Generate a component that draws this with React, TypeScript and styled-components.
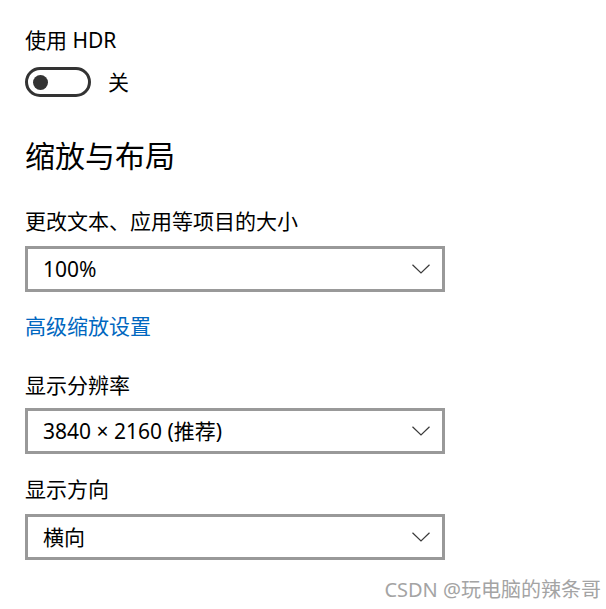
import styled, { createGlobalStyle } from "styled-components";

const GlobalStyle = createGlobalStyle`
  html, body {
    margin: 0;
    padding: 0;
    background: #ffffff;
  }
  body {
    font-family: "Noto Sans", "Noto Sans CJK SC", sans-serif;
    color: #000000;
  }
`;

const Chevron = () => (
  <svg width="18" height="10" viewBox="0 0 18 10" fill="none">
    <polyline points="0.5,0.8 9,9 17.5,0.8" stroke="#3a3a3a" strokeWidth="1.2" />
  </svg>
);

interface DropdownProps {
  value: string;
  top?: number;
}

const Dropdown = ({ value, top = 0 }: DropdownProps) => (
  <SelectBox $top={top}>
    <SelectValue>{value}</SelectValue>
    <Chevron />
  </SelectBox>
);

const App = () => (
  <>
    <GlobalStyle />
    <Page>
      <Label $top={0}>使用 HDR</Label>
      <ToggleRow>
        <Toggle>
          <Thumb />
        </Toggle>
        <ToggleText>关</ToggleText>
      </ToggleRow>

      <Heading>缩放与布局</Heading>

      <Label $top={31}>更改文本、应用等项目的大小</Label>
      <Dropdown value="100%" top={11} />
      <Link>高级缩放设置</Link>

      <Label $top={31}>显示分辨率</Label>
      <Dropdown value="3840 × 2160 (推荐)" top={9} />

      <Label $top={21}>显示方向</Label>
      <Dropdown value="横向" top={11} />

      <Watermark>CSDN @玩电脑的辣条哥</Watermark>
    </Page>
  </>
);

const Page = styled.div`
  display: flex;
  flex-direction: column;
  align-items: flex-start;
  width: 606px;
  height: 609px;
  box-sizing: border-box;
  padding: 26px 0 0 25px;
  overflow: hidden;
`;

const Label = styled.div<{ $top: number }>`
  margin-top: ${({ $top }) => $top}px;
  font-size: 21px;
  line-height: 28px;
  color: #000000;
`;

const ToggleRow = styled.div`
  display: flex;
  align-items: center;
  gap: 17px;
  margin-top: 13px;
  height: 30px;
`;

const Toggle = styled.div`
  display: flex;
  align-items: center;
  width: 66px;
  height: 30px;
  box-sizing: border-box;
  border: 3px solid #333333;
  border-radius: 15px;
  padding-left: 5px;
`;

const Thumb = styled.div`
  width: 15px;
  height: 15px;
  border-radius: 50%;
  background: #333333;
`;

const ToggleText = styled.span`
  font-size: 21px;
  line-height: 28px;
`;

const Heading = styled.h2`
  margin: 39px 0 0;
  font-size: 30px;
  line-height: 40px;
  font-weight: 400;
`;

const SelectBox = styled.div<{ $top: number }>`
  display: flex;
  align-items: center;
  justify-content: space-between;
  margin-top: ${({ $top }) => $top}px;
  width: 420px;
  height: 46px;
  box-sizing: border-box;
  border: 3px solid #999999;
  padding: 0 12px 0 15px;
  background: #ffffff;
`;

const SelectValue = styled.span`
  font-size: 21px;
  line-height: 28px;
  color: #000000;
`;

const Link = styled.a`
  margin-top: 20px;
  font-size: 21px;
  line-height: 28px;
  color: #0067c0;
  cursor: pointer;
`;

const Watermark = styled.div`
  align-self: flex-end;
  margin-top: 18px;
  margin-right: 5px;
  font-size: 20px;
  line-height: 24px;
  color: #a4a4a4;
`;

export default App;
